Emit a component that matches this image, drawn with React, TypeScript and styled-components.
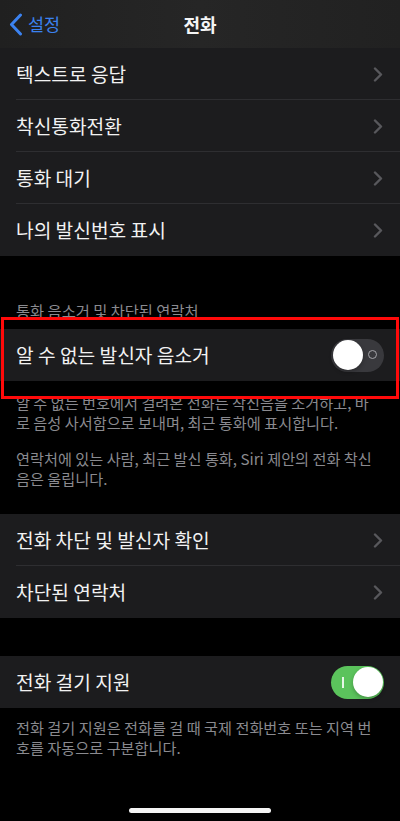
import styled, { createGlobalStyle } from "styled-components";

const GlobalStyle = createGlobalStyle`
  html, body {
    margin: 0;
    padding: 0;
    background: #000;
  }
  body {
    font-family: "Inter", "Noto Sans CJK KR", sans-serif;
    -webkit-font-smoothing: antialiased;
  }
`;

const Page = styled.div`
  width: 400px;
  height: 821px;
  background: #000;
  display: flex;
  flex-direction: column;
  overflow: hidden;
`;

const NavBar = styled.div`
  height: 48px;
  flex-shrink: 0;
  background: linear-gradient(90deg, #202020, #262626 50%, #212121);
  display: grid;
  grid-template-columns: 1fr auto 1fr;
  align-items: center;
`;

const BackButton = styled.div`
  display: flex;
  align-items: center;
  gap: 5px;
  padding-left: 9px;
  color: #3b82f0;
  font-family: "Noto Sans CJK KR", sans-serif;
  font-size: 17.5px;
  line-height: 20px;
`;

const Title = styled.div`
  color: #f5f5f5;
  font-family: "Noto Sans CJK KR", sans-serif;
  font-size: 18px;
  font-weight: 600;
  line-height: 20px;
`;

const Group = styled.div`
  background: #1c1c1e;
  flex-shrink: 0;
`;

const Row = styled.div<{ $last?: boolean }>`
  height: 52px;
  display: flex;
  align-items: center;
  margin-left: 16px;
  padding-right: 17px;
  box-shadow: ${(p) => (p.$last ? "none" : "inset 0 -1px 0 #2e2e31")};
`;

const Label = styled.div`
  flex: 1;
  color: #f2f2f2;
  font-family: "Noto Sans CJK KR", sans-serif;
  font-size: 19.2px;
  line-height: 22px;
`;

const Chevron = () => (
  <svg width="10" height="15" viewBox="0 0 10 15">
    <path
      d="M2 1.5 L8 7.5 L2 13.5"
      fill="none"
      stroke="#58585c"
      strokeWidth="2.4"
      strokeLinecap="round"
      strokeLinejoin="round"
    />
  </svg>
);

const Track = styled.div<{ $on: boolean }>`
  position: relative;
  width: 53px;
  height: 33px;
  border-radius: 17px;
  background: ${(p) => (p.$on ? "#5bc35c" : "#39393d")};
  margin-right: -1px;
  flex-shrink: 0;
`;

const Knob = styled.div<{ $on: boolean }>`
  position: absolute;
  top: 1.5px;
  left: ${(p) => (p.$on ? "21.5px" : "1.5px")};
  width: 30px;
  height: 30px;
  border-radius: 50%;
  background: #fff;
  box-shadow: 0 2px 4px rgba(0, 0, 0, 0.25);
`;

const OnMark = styled.div`
  position: absolute;
  left: 11px;
  top: 11px;
  width: 1.5px;
  height: 11px;
  background: rgba(255, 255, 255, 0.85);
`;

const OffMark = styled.div`
  position: absolute;
  right: 7px;
  top: calc(50% - 5px);
  width: 7px;
  height: 7px;
  border: 1.5px solid #a5a5aa;
  border-radius: 50%;
`;

const Toggle = ({ on }: { on: boolean }) => (
  <Track $on={on}>
    {on ? <OnMark /> : <OffMark />}
    <Knob $on={on} />
  </Track>
);

const SectionHeader = styled.div`
  padding: 44px 16px 9px;
  color: #8a8a8f;
  font-family: "Noto Sans CJK KR", sans-serif;
  font-size: 15.3px;
  line-height: 20px;
  flex-shrink: 0;
`;

const Footer = styled.div<{ $top: number; $bottom: number }>`
  padding: ${(p) => `${p.$top}px 16px ${p.$bottom}px`};
  color: #8a8a8f;
  font-family: "Noto Sans CJK KR", sans-serif;
  font-size: 15.2px;
  line-height: 20px;
  flex-shrink: 0;
  white-space: nowrap;
`;

const Para = styled.p`
  margin: 0;
  & + & {
    margin-top: 16px;
  }
`;

const Spacer = styled.div<{ $h: number }>`
  height: ${(p) => p.$h}px;
  flex-shrink: 0;
`;

const Highlight = styled.div`
  position: relative;
  &::after {
    content: "";
    position: absolute;
    left: 1px;
    right: 1px;
    top: -12px;
    bottom: -18px;
    border: 3.5px solid #ff0a0a;
    pointer-events: none;
    z-index: 2;
  }
`;

const Bottom = styled.div`
  margin-top: auto;
  display: flex;
  justify-content: center;
  padding-bottom: 8px;
`;

const HomeIndicator = styled.div`
  width: 142px;
  height: 5px;
  border-radius: 3px;
  background: #f4f4f4;
`;

const navRows = ["텍스트로 응답", "착신통화전환", "통화 대기", "나의 발신번호 표시"];
const blockRows = ["전화 차단 및 발신자 확인", "차단된 연락처"];

export default function App() {
  return (
    <>
      <GlobalStyle />
      <Page>
        <NavBar>
          <BackButton>
            <svg width="14" height="23" viewBox="0 0 14 23">
              <path
                d="M11.5 2 L2.5 11.5 L11.5 21"
                fill="none"
                stroke="#3b82f0"
                strokeWidth="3"
                strokeLinecap="round"
                strokeLinejoin="round"
              />
            </svg>
            <span>설정</span>
          </BackButton>
          <Title>전화</Title>
          <div />
        </NavBar>

        <Group>
          {navRows.map((label, i) => (
            <Row key={label} $last={i === navRows.length - 1}>
              <Label>{label}</Label>
              <Chevron />
            </Row>
          ))}
        </Group>

        <SectionHeader>통화 음소거 및 차단된 연락처</SectionHeader>
        <Highlight>
          <Group>
            <Row $last>
              <Label>알 수 없는 발신자 음소거</Label>
              <Toggle on={false} />
            </Row>
          </Group>
        </Highlight>
        <Footer $top={11} $bottom={26}>
          <Para>
            알 수 없는 번호에서 걸려온 전화는 착신음을 소거하고, 바
            <br />로 음성 사서함으로 보내며, 최근 통화에 표시합니다.
          </Para>
          <Para>
            연락처에 있는 사람, 최근 발신 통화, Siri 제안의 전화 착신
            <br />
            음은 울립니다.
          </Para>
        </Footer>

        <Group>
          {blockRows.map((label, i) => (
            <Row key={label} $last={i === blockRows.length - 1}>
              <Label>{label}</Label>
              <Chevron />
            </Row>
          ))}
        </Group>

        <Spacer $h={38} />

        <Group>
          <Row $last>
            <Label>전화 걸기 지원</Label>
            <Toggle on />
          </Row>
        </Group>
        <Footer $top={9} $bottom={0}>
          <Para>
            전화 걸기 지원은 전화를 걸 때 국제 전화번호 또는 지역 번
            <br />
            호를 자동으로 구분합니다.
          </Para>
        </Footer>

        <Bottom>
          <HomeIndicator />
        </Bottom>
      </Page>
    </>
  );
}
